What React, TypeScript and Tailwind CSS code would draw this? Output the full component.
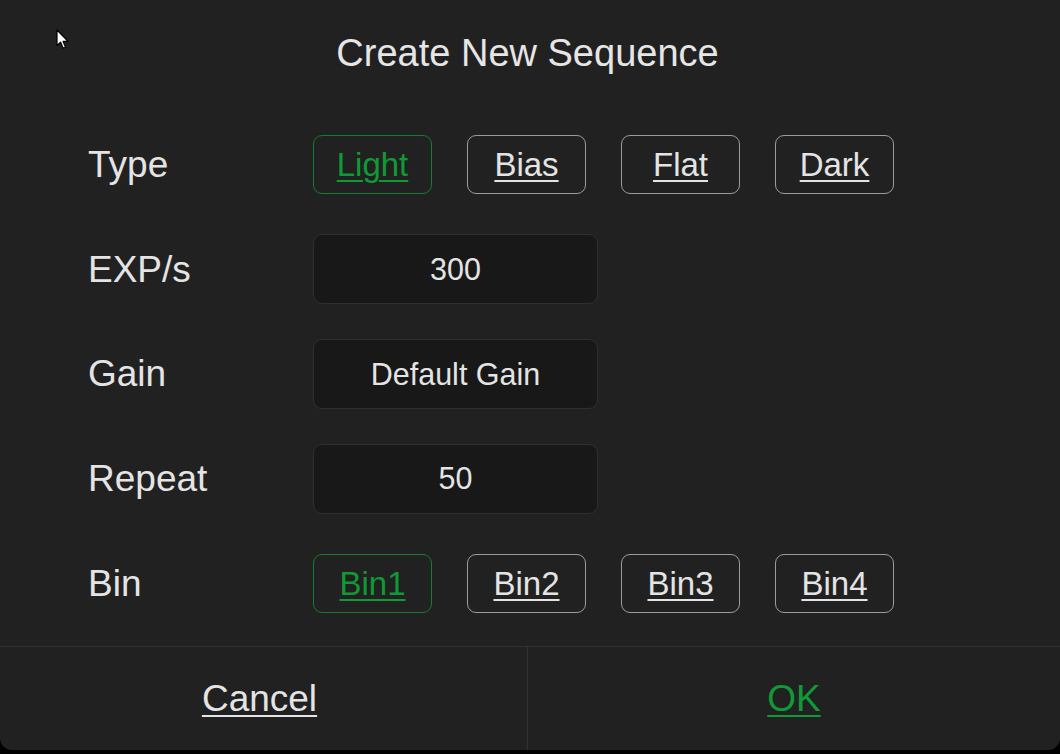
const FONT = { fontFamily: '"Liberation Sans", Arial, sans-serif' };

type ChoiceProps = {
  label: string;
  active?: boolean;
};

function Choice({ label, active }: ChoiceProps) {
  return (
    <button
      type="button"
      className={
        active
          ? "flex h-[59px] w-[119px] items-center justify-center rounded-[9px] border border-[#187a31] text-[33px] leading-none text-[#0f9a36] underline decoration-2 underline-offset-[4px]"
          : "flex h-[59px] w-[119px] items-center justify-center rounded-[9px] border border-[#9c9c9c] text-[33px] leading-none text-[#e4e4e4] underline decoration-2 underline-offset-[4px]"
      }
    >
      {label}
    </button>
  );
}

function Field({ value }: { value: string }) {
  return (
    <div className="flex h-[70px] w-[285px] items-center justify-center rounded-[9px] border border-[#2f2f2f] bg-[#181818] text-[30.5px] leading-none text-[#e4e4e4]">
      {value}
    </div>
  );
}

function Row({ label, children }: { label: string; children: React.ReactNode }) {
  return (
    <div className="flex h-[104.75px] items-center">
      <div className="w-[225px] text-[37px] leading-none text-[#e4e4e4]">{label}</div>
      <div className="flex items-center gap-[35px]">{children}</div>
    </div>
  );
}

export default function App() {
  return (
    <div className="h-[754px] w-[1060px] bg-black" style={FONT}>
      <div className="relative flex h-[750px] flex-col overflow-hidden rounded-b-[12px] bg-[#212121]">
        <div className="flex h-[105px] items-center justify-center pr-[5px] text-[38px] leading-none text-[#e6e6e6]">
          Create New Sequence
        </div>

        <div className="flex flex-col pl-[88px] pt-[7px]">
          <Row label="Type">
            <Choice label="Light" active />
            <Choice label="Bias" />
            <Choice label="Flat" />
            <Choice label="Dark" />
          </Row>
          <Row label="EXP/s">
            <Field value="300" />
          </Row>
          <Row label="Gain">
            <Field value="Default Gain" />
          </Row>
          <Row label="Repeat">
            <Field value="50" />
          </Row>
          <Row label="Bin">
            <Choice label="Bin1" active />
            <Choice label="Bin2" />
            <Choice label="Bin3" />
            <Choice label="Bin4" />
          </Row>
        </div>

        <div className="mt-auto flex h-[104px] border-t border-[#323232]">
          <button
            type="button"
            className="flex w-[528px] items-center justify-center border-r border-[#323232] pr-[8px] text-[37px] leading-none text-[#e4e4e4] underline decoration-2 underline-offset-[4px]"
          >
            Cancel
          </button>
          <button
            type="button"
            className="flex flex-1 items-center justify-center text-[37px] leading-none text-[#0f9a36] underline decoration-2 underline-offset-[4px]"
          >
            OK
          </button>
        </div>

        <svg
          className="absolute left-[56px] top-[29px]"
          width="14"
          height="21"
          viewBox="0 0 14 21"
        >
          <path
            d="M1 1 L1 16.5 L4.6 13.2 L7.2 19.3 L9.6 18.3 L7.1 12.4 L12 12.4 Z"
            fill="#ffffff"
            stroke="#000000"
            strokeWidth="1.2"
            strokeLinejoin="round"
          />
        </svg>
      </div>
    </div>
  );
}
